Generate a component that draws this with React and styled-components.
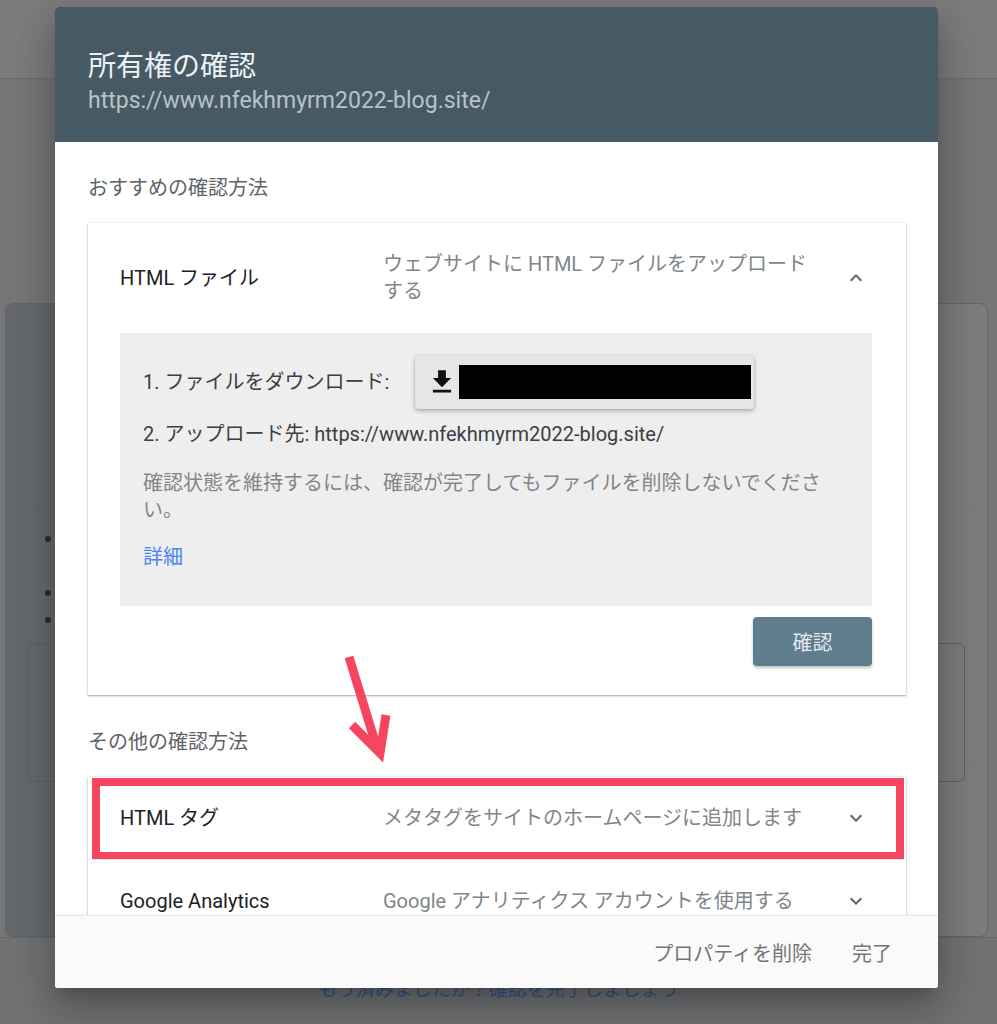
import React from 'react';
import styled, { createGlobalStyle } from 'styled-components';

const GlobalStyle = createGlobalStyle`
  html, body {
    margin: 0;
    padding: 0;
    background: #767678;
  }
  body {
    font-family: Roboto, "Noto Sans CJK JP", sans-serif;
    overflow: hidden;
  }
`;

const Page = styled.div`
  position: relative;
  width: 997px;
  height: 1024px;
  overflow: hidden;
  background: #767678;
`;

const TopBar = styled.div`
  height: 78px;
  background: #7c7c7e;
  border-bottom: 1px solid #6d6d6f;
`;

const Main = styled.div`
  padding-top: 224px;
`;

const BgCard = styled.div`
  margin: 0 9px 0 5px;
  height: 634px;
  box-sizing: border-box;
  border: 1px solid #636567;
  border-radius: 8px;
  background: linear-gradient(90deg, #65696c 0%, #6c6f72 45%, #7d7d7e 100%);
  overflow: hidden;
`;

const BgList = styled.ul`
  margin: 221px 0 0;
  padding-left: 58px;
  font-size: 19px;
  line-height: 27px;
  color: #2b2c2e;
`;

const BgBox = styled.div`
  margin: 10px 22px 0 22px;
  height: 137px;
  border: 1px solid #5e6062;
  border-radius: 6px;
`;

const BottomBar = styled.div`
  border-top: 1px solid #666769;
  background: #717274;
  height: 90px;
  padding-top: 36px;
  box-sizing: border-box;
  text-align: center;
  font-size: 19px;
  color: #35558f;
`;

const Dialog = styled.div`
  position: absolute;
  top: 7px;
  left: 55px;
  width: 883px;
  height: 981px;
  display: flex;
  flex-direction: column;
  background: #fff;
  border-radius: 3px;
  overflow: hidden;
  box-shadow: 0 11px 15px -7px rgba(0, 0, 0, 0.2),
    0 24px 38px 3px rgba(0, 0, 0, 0.14), 0 9px 46px 8px rgba(0, 0, 0, 0.12);
`;

const DialogHeader = styled.div`
  height: 135px;
  flex-shrink: 0;
  box-sizing: border-box;
  padding: 42px 33px 0;
  background: #465a65;
`;

const Title = styled.div`
  font-size: 28px;
  line-height: 36px;
  color: #eef1f3;
`;

const HeaderUrl = styled.div`
  margin-top: 1px;
  font-size: 23px;
  line-height: 30px;
  color: #b8c2c8;
`;

const DialogBody = styled.div`
  position: relative;
  flex: 1;
  overflow: hidden;
  padding: 33px 32px 0 33px;
`;

const SectionLabel = styled.div`
  font-size: 20px;
  line-height: 27px;
  color: #5f6368;
  margin: ${(p) => (p.$first ? '0' : '34px')} 0 21px;
`;

const MethodCard = styled.div`
  padding: 0 34px 29px 32px;
  background: #fff;
  box-shadow: 0 1px 3px rgba(0, 0, 0, 0.2), 0 1px 1px rgba(0, 0, 0, 0.12),
    0 0 2px rgba(0, 0, 0, 0.1);
`;

const MethodHeader = styled.div`
  display: flex;
  align-items: center;
  height: 110px;
`;

const MethodName = styled.div`
  width: 263px;
  flex-shrink: 0;
  font-size: 20px;
  line-height: 27px;
  color: #202124;
`;

const MethodDesc = styled.div`
  width: 432px;
  font-size: 20px;
  line-height: 27px;
  color: #80868b;
`;

const Chevron = styled.svg`
  width: 24px;
  height: 24px;
  margin-left: auto;
  margin-right: 4px;
  fill: #5f6368;
`;

const Panel = styled.div`
  background: #eeeeee;
  padding: 22px 40px 35px 23px;
  font-size: 20px;
  line-height: 27px;
  color: #3c4043;
`;

const StepRow = styled.div`
  display: flex;
  align-items: center;
  gap: 22px;
`;

const StepLabel = styled.span`
  width: 250px;
  flex-shrink: 0;
`;

const DownloadButton = styled.div`
  display: flex;
  align-items: center;
  gap: 6px;
  width: 339px;
  height: 54px;
  box-sizing: border-box;
  padding-left: 16px;
  background: #e6e6e6;
  border-radius: 4px;
  box-shadow: 0 2px 4px rgba(0, 0, 0, 0.28), 0 0 2px rgba(0, 0, 0, 0.1);
`;

const DownloadIcon = styled.svg`
  width: 22px;
  height: 26px;
  fill: #111;
`;

const Redacted = styled.span`
  display: block;
  width: 292px;
  height: 34px;
  background: #000;
`;

const StepText = styled.div`
  margin-top: 12px;
`;

const Note = styled.p`
  margin: 22px 0 0;
  color: #80868b;
`;

const MoreLink = styled.a`
  display: block;
  width: fit-content;
  margin-top: 20px;
  color: #4c84f0;
  text-decoration: none;
`;

const Actions = styled.div`
  display: flex;
  justify-content: flex-end;
  margin-top: 11px;
`;

const ConfirmButton = styled.button`
  width: 119px;
  height: 49px;
  border: none;
  border-radius: 4px;
  background: #5f7d8c;
  color: #e3e9ec;
  font-family: inherit;
  font-size: 20px;
  box-shadow: 0 2px 3px rgba(0, 0, 0, 0.25);
`;

const MethodList = styled.div`
  background: #fff;
  box-shadow: 0 1px 3px rgba(0, 0, 0, 0.2), 0 1px 1px rgba(0, 0, 0, 0.12),
    0 0 2px rgba(0, 0, 0, 0.1);
`;

const MethodRow = styled.div`
  position: relative;
  display: flex;
  align-items: center;
  height: 82px;
  padding: 0 34px 0 32px;
  border-top: ${(p) => (p.$first ? 'none' : '1px solid #e6e6e6')};

  ${(p) =>
    p.$highlight &&
    `
    &::after {
      content: '';
      position: absolute;
      top: 1px;
      bottom: -1px;
      left: 4px;
      right: 2px;
      border: 8px solid #f5455f;
    }
  `}
`;

const Arrow = styled.svg`
  position: absolute;
  left: 285px;
  top: 511px;
  width: 60px;
  height: 110px;
`;

const DialogFooter = styled.div`
  flex-shrink: 0;
  height: 72px;
  display: flex;
  justify-content: flex-end;
  align-items: center;
  gap: 16px;
  padding-right: 34px;
  background: #fafafa;
  border-top: 1px solid #e8e8e8;
  box-shadow: 0 -1px 3px rgba(0, 0, 0, 0.05);
`;

const TextButton = styled.button`
  border: none;
  background: none;
  padding: 0 12px;
  font-family: inherit;
  font-size: 20px;
  color: #757575;
`;

const ExpandIcon = ({ up }) => (
  <Chevron viewBox="0 0 24 24">
    {up ? (
      <path d="M12 8l-6 6 1.41 1.41L12 10.83l4.59 4.58L18 14z" />
    ) : (
      <path d="M16.59 8.59L12 13.17 7.41 8.59 6 10l6 6 6-6z" />
    )}
  </Chevron>
);

const siteUrl = 'https://www.nfekhmyrm2022-blog.site/';

const App = () => {
  return (
    <Page>
      <GlobalStyle />
      <TopBar />
      <Main>
        <BgCard>
          <BgList>
            <li>
              所有権の確認方法を選択してください
              <br />
              で確認できます
            </li>
            <li>確認済みのユーザー</li>
            <li>確認方法</li>
          </BgList>
          <BgBox />
        </BgCard>
      </Main>
      <BottomBar>もう済みましたか？確認を完了しましょう</BottomBar>

      <Dialog>
        <DialogHeader>
          <Title>所有権の確認</Title>
          <HeaderUrl>{siteUrl}</HeaderUrl>
        </DialogHeader>

        <DialogBody>
          <SectionLabel $first>おすすめの確認方法</SectionLabel>
          <MethodCard>
            <MethodHeader>
              <MethodName>HTML ファイル</MethodName>
              <MethodDesc>ウェブサイトに HTML ファイルをアップロードする</MethodDesc>
              <ExpandIcon up />
            </MethodHeader>
            <Panel>
              <StepRow>
                <StepLabel>1. ファイルをダウンロード:</StepLabel>
                <DownloadButton>
                  <DownloadIcon viewBox="4 2 16 20">
                    <path d="M19 9h-4V3H9v6H5l7 7 7-7zM5 18v2h14v-2H5z" />
                  </DownloadIcon>
                  <Redacted />
                </DownloadButton>
              </StepRow>
              <StepText>2. アップロード先: {siteUrl}</StepText>
              <Note>
                確認状態を維持するには、確認が完了してもファイルを削除しないでください。
              </Note>
              <MoreLink href="#">詳細</MoreLink>
            </Panel>
            <Actions>
              <ConfirmButton>確認</ConfirmButton>
            </Actions>
          </MethodCard>

          <SectionLabel>その他の確認方法</SectionLabel>
          <MethodList>
            <MethodRow $first $highlight>
              <MethodName>HTML タグ</MethodName>
              <MethodDesc>メタタグをサイトのホームページに追加します</MethodDesc>
              <ExpandIcon />
            </MethodRow>
            <MethodRow>
              <MethodName>Google Analytics</MethodName>
              <MethodDesc>Google アナリティクス アカウントを使用する</MethodDesc>
              <ExpandIcon />
            </MethodRow>
          </MethodList>

          <Arrow viewBox="0 0 60 110">
            <line x1="9" y1="4" x2="36" y2="92" stroke="#f5455f" strokeWidth="9" />
            <polyline
              points="12,72 40,100 46,62"
              fill="none"
              stroke="#f5455f"
              strokeWidth="9"
              strokeLinejoin="miter"
            />
          </Arrow>
        </DialogBody>

        <DialogFooter>
          <TextButton>プロパティを削除</TextButton>
          <TextButton>完了</TextButton>
        </DialogFooter>
      </Dialog>
    </Page>
  );
};

export default App;
